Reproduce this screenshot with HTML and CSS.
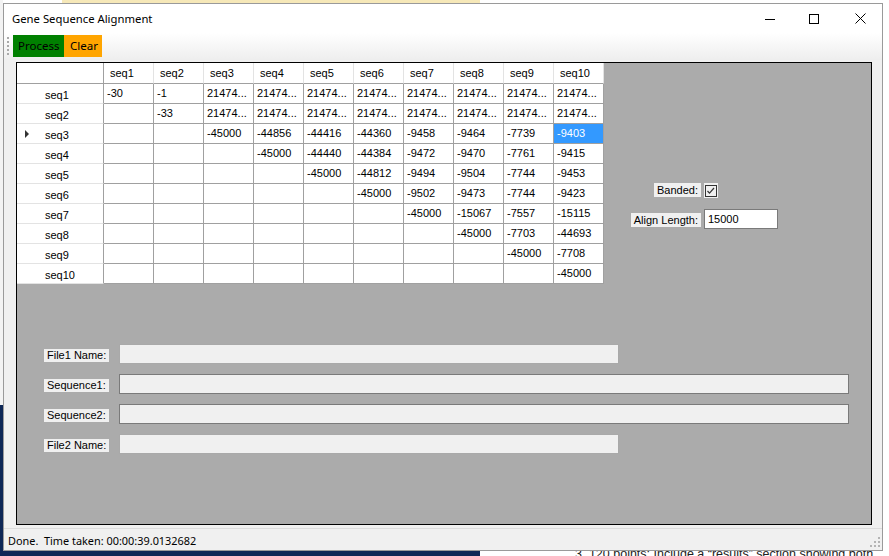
FILE: index.html
```html
<!DOCTYPE html>
<html>
<head>
<meta charset="utf-8">
<title>Gene Sequence Alignment</title>
<link rel="stylesheet" href="styles.css">
</head>
<body>
<div class="desktop">
  <div class="doc-note">3. 120 points: Include a “results” section showing both</div>
  <div class="window">
    <div class="titlebar">
      <span class="title">Gene Sequence Alignment</span>
      <div class="caption">
        <span class="cap-btn cap-min"><svg width="10" height="10" viewBox="0 0 10 10"><path d="M0 5.5H10" stroke="#000" stroke-width="1" fill="none"/></svg></span>
        <span class="cap-btn cap-max"><svg width="10" height="10" viewBox="0 0 10 10"><rect x="0.5" y="0.5" width="9" height="9" stroke="#000" stroke-width="1" fill="none"/></svg></span>
        <span class="cap-btn cap-close"><svg width="11" height="11" viewBox="0 0 11 11"><path d="M0.5 0.5L10.5 10.5M10.5 0.5L0.5 10.5" stroke="#000" stroke-width="1" fill="none"/></svg></span>
      </div>
    </div>
    <div class="toolbar">
      <span class="grip"></span>
      <span class="tb-btn process">Process</span>
      <span class="tb-btn clear">Clear</span>
    </div>
    <div class="panel">
      <div class="top">
        <div class="grid">
          <div class="corner"></div>
          <div class="ch">seq1</div><div class="ch">seq2</div><div class="ch">seq3</div><div class="ch">seq4</div><div class="ch">seq5</div><div class="ch">seq6</div><div class="ch">seq7</div><div class="ch">seq8</div><div class="ch">seq9</div><div class="ch">seq10</div>

          <div class="rh"><span class="ind"></span>seq1</div>
          <div class="c">-30</div><div class="c">-1</div><div class="c">21474...</div><div class="c">21474...</div><div class="c">21474...</div><div class="c">21474...</div><div class="c">21474...</div><div class="c">21474...</div><div class="c">21474...</div><div class="c">21474...</div>

          <div class="rh"><span class="ind"></span>seq2</div>
          <div class="c"></div><div class="c">-33</div><div class="c">21474...</div><div class="c">21474...</div><div class="c">21474...</div><div class="c">21474...</div><div class="c">21474...</div><div class="c">21474...</div><div class="c">21474...</div><div class="c">21474...</div>

          <div class="rh"><span class="ind current"></span>seq3</div>
          <div class="c"></div><div class="c"></div><div class="c">-45000</div><div class="c">-44856</div><div class="c">-44416</div><div class="c">-44360</div><div class="c">-9458</div><div class="c">-9464</div><div class="c">-7739</div><div class="c selected">-9403</div>

          <div class="rh"><span class="ind"></span>seq4</div>
          <div class="c"></div><div class="c"></div><div class="c"></div><div class="c">-45000</div><div class="c">-44440</div><div class="c">-44384</div><div class="c">-9472</div><div class="c">-9470</div><div class="c">-7761</div><div class="c">-9415</div>

          <div class="rh"><span class="ind"></span>seq5</div>
          <div class="c"></div><div class="c"></div><div class="c"></div><div class="c"></div><div class="c">-45000</div><div class="c">-44812</div><div class="c">-9494</div><div class="c">-9504</div><div class="c">-7744</div><div class="c">-9453</div>

          <div class="rh"><span class="ind"></span>seq6</div>
          <div class="c"></div><div class="c"></div><div class="c"></div><div class="c"></div><div class="c"></div><div class="c">-45000</div><div class="c">-9502</div><div class="c">-9473</div><div class="c">-7744</div><div class="c">-9423</div>

          <div class="rh"><span class="ind"></span>seq7</div>
          <div class="c"></div><div class="c"></div><div class="c"></div><div class="c"></div><div class="c"></div><div class="c"></div><div class="c">-45000</div><div class="c">-15067</div><div class="c">-7557</div><div class="c">-15115</div>

          <div class="rh"><span class="ind"></span>seq8</div>
          <div class="c"></div><div class="c"></div><div class="c"></div><div class="c"></div><div class="c"></div><div class="c"></div><div class="c"></div><div class="c">-45000</div><div class="c">-7703</div><div class="c">-44693</div>

          <div class="rh"><span class="ind"></span>seq9</div>
          <div class="c"></div><div class="c"></div><div class="c"></div><div class="c"></div><div class="c"></div><div class="c"></div><div class="c"></div><div class="c"></div><div class="c">-45000</div><div class="c">-7708</div>

          <div class="rh"><span class="ind"></span>seq10</div>
          <div class="c"></div><div class="c"></div><div class="c"></div><div class="c"></div><div class="c"></div><div class="c"></div><div class="c"></div><div class="c"></div><div class="c"></div><div class="c">-45000</div>
        </div>
        <div class="options">
          <span class="lbl opt-lbl">Banded:</span>
          <span class="check"><svg width="13" height="13" viewBox="0 0 13 13"><rect x="1.5" y="1.5" width="11" height="11" fill="#f0f0f0" stroke="#333" stroke-width="1"/><path d="M3.5 7L5.5 9.2L10 4" stroke="#333" stroke-width="1.2" fill="none"/></svg></span>
          <span class="lbl opt-lbl opt-lbl2">Align Length:</span>
          <span class="textbox">15000</span>
        </div>
      </div>
      <div class="fields">
        <span class="lbl field-lbl">File1 Name:</span><span class="field short"></span>
        <span class="lbl field-lbl">Sequence1:</span><span class="field long"></span>
        <span class="lbl field-lbl">Sequence2:</span><span class="field long"></span>
        <span class="lbl field-lbl">File2 Name:</span><span class="field short"></span>
      </div>
    </div>
    <div class="statusbar">
      <span class="status-text">Done.  Time taken: 00:00:39.0132682</span>
      <svg class="sizegrip" width="11" height="10" viewBox="0 0 11 10"><g fill="#b4b4b4"><rect x="8" y="0" width="2" height="2"/><rect x="4" y="4" width="2" height="2"/><rect x="8" y="4" width="2" height="2"/><rect x="0" y="8" width="2" height="2"/><rect x="4" y="8" width="2" height="2"/><rect x="8" y="8" width="2" height="2"/></g></svg>
    </div>
  </div>
</div>
</body>
</html>
```

FILE: styles.css
```css
html, body {
  margin: 0;
  padding: 0;
}

body {
  width: 889px;
  height: 556px;
  overflow: hidden;
  font-family: "Liberation Sans", Arial, sans-serif;
}

.desktop {
  position: relative;
  width: 889px;
  height: 556px;
  overflow: hidden;
  background:
    linear-gradient(#0e2756, #0e2756) 0 405px / 3px 151px no-repeat,
    linear-gradient(#0e2756, #0e2756) 0 550px / 480px 6px no-repeat,
    linear-gradient(#f6e8b8, #f6e8b8) 62px 0 / 418px 3px no-repeat,
    linear-gradient(#f3f3f3, #f3f3f3) 0 0 / 3px 405px no-repeat,
    #ffffff;
}

.doc-note {
  position: absolute;
  left: 575px;
  top: 547px;
  font-family: "Liberation Sans", Arial, sans-serif;
  font-size: 12.5px;
  line-height: 14px;
  color: #222;
  white-space: nowrap;
}

.window {
  position: absolute;
  left: 3px;
  top: 3px;
  width: 880px;
  height: 548px;
  box-sizing: border-box;
  border: 1px solid #9a9a9a;
  background: #f0f0f0;
  display: flex;
  flex-direction: column;
}

/* Title bar */
.titlebar {
  height: 29px;
  flex: none;
  background: #ffffff;
  display: flex;
  align-items: center;
}

.title {
  font-family: "Noto Sans", "Open Sans", sans-serif;
  font-size: 11.3px;
  color: #000;
  padding-left: 8px;
  flex: 1;
  padding-bottom: 1px;
}

.caption {
  display: flex;
  height: 29px;
}

.cap-btn {
  width: 46px;
  height: 29px;
  box-sizing: border-box;
  display: flex;
  align-items: center;
}

.cap-btn svg { display: block; }
.cap-min { padding-left: 21px; }
.cap-max { padding-left: 19px; }
.cap-close { padding-left: 19px; }

/* Toolbar */
.toolbar {
  height: 27px;
  flex: none;
  box-sizing: border-box;
  padding: 2px 0 0 3px;
  display: flex;
  align-items: flex-start;
  background: linear-gradient(to bottom, #ffffff, #eeeeee);
}

.grip {
  width: 2px;
  height: 18px;
  margin-top: 2px;
  margin-right: 4px;
  background: repeating-linear-gradient(to bottom, #a9a9a9 0 2px, transparent 2px 4px);
}

.tb-btn {
  height: 22px;
  line-height: 21px;
  box-sizing: border-box;
  font-family: "Noto Sans", "Open Sans", sans-serif;
  font-size: 11.5px;
  color: #000;
}

.process {
  width: 51px;
  padding-left: 5px;
  background: #008000;
}

.clear {
  width: 38px;
  padding-left: 6px;
  background: #ffa500;
}

/* Main panel */
.panel {
  flex: none;
  height: 463px;
  margin: 2px 10px 3px 12px;
  box-sizing: border-box;
  border: 1px solid #000;
  background: #ababab;
  display: flex;
  flex-direction: column;
}

.top {
  display: flex;
  align-items: flex-start;
  height: 221px;
}

.grid {
  display: grid;
  grid-template-columns: 87px repeat(10, 50px);
  grid-template-rows: 21px;
  grid-auto-rows: 20px;
  background: #ffffff;
  font-size: 11px;
  color: #000;
}

.grid > div {
  box-sizing: border-box;
  white-space: nowrap;
  overflow: hidden;
}

.corner {
  border-right: 1px solid #a0a0a0;
  border-bottom: 1px solid #a0a0a0;
}

.ch {
  border-right: 1px solid #e3e3e3;
  border-bottom: 1px solid #a0a0a0;
  padding-left: 6px;
  line-height: 20px;
}

.rh {
  border-right: 1px solid #a0a0a0;
  border-bottom: 1px solid #e3e3e3;
  padding-left: 8px;
  padding-top: 3px;
  line-height: 16px;
  display: flex;
  align-items: center;
}

.ind {
  width: 20px;
  height: 8px;
  flex: none;
}

.ind.current {
  width: 0;
  height: 0;
  margin-right: 16px;
  margin-top: -2px;
  border-top: 4px solid transparent;
  border-bottom: 4px solid transparent;
  border-left: 4px solid #333;
}

.c {
  border-right: 1px solid #a0a0a0;
  border-bottom: 1px solid #a0a0a0;
  padding-left: 3px;
  line-height: 19px;
}

.c.selected {
  background: #3399ff;
  color: #ffffff;
}

/* Options */
.options {
  display: grid;
  grid-template-columns: 69px 74px;
  grid-template-rows: 15px 20px;
  column-gap: 3px;
  row-gap: 11px;
  margin-left: 28px;
  margin-top: 120px;
  align-items: start;
}

.lbl {
  background: #f0f0f0;
  font-size: 11px;
  color: #000;
  white-space: nowrap;
  box-sizing: border-box;
}

.opt-lbl {
  justify-self: end;
  height: 14px;
  line-height: 14px;
  padding: 0 3px;
}

.opt-lbl2 {
  margin-top: 4px;
}

.check {
  width: 14px;
  height: 15px;
  background: #f0f0f0;
  display: flex;
  align-items: center;
}

.check svg { display: block; }

.textbox {
  width: 74px;
  height: 20px;
  box-sizing: border-box;
  border: 1px solid #7a7a7a;
  background: #ffffff;
  font-size: 11px;
  line-height: 18px;
  padding-left: 3px;
  color: #000;
}

/* Fields */
.fields {
  display: grid;
  grid-template-columns: 75px auto;
  grid-auto-rows: 20px;
  row-gap: 10px;
  margin-left: 27px;
  margin-top: 60px;
  align-items: start;
  justify-items: start;
}

.field-lbl {
  height: 13px;
  line-height: 13px;
  padding: 0 3px;
  margin-top: 5px;
}

.field {
  height: 20px;
  box-sizing: border-box;
  background: #f0f0f0;
  border: 1px solid #7a7a7a;
}

.field.short {
  width: 500px;
  border-color: #a9a9a9;
}

.field.long {
  width: 730px;
}

/* Status bar */
.statusbar {
  flex: none;
  height: 22px;
  box-sizing: border-box;
  border-top: 1px solid #dcdcdc;
  display: flex;
  align-items: center;
  padding-left: 4px;
}

.status-text {
  font-family: "Noto Sans", "Open Sans", sans-serif;
  font-size: 10.9px;
  white-space: pre;
  color: #000;
  flex: 1;
  padding-top: 1px;
}

.sizegrip {
  display: block;
  align-self: flex-end;
  margin: 0 1px 3px 0;
}
```
